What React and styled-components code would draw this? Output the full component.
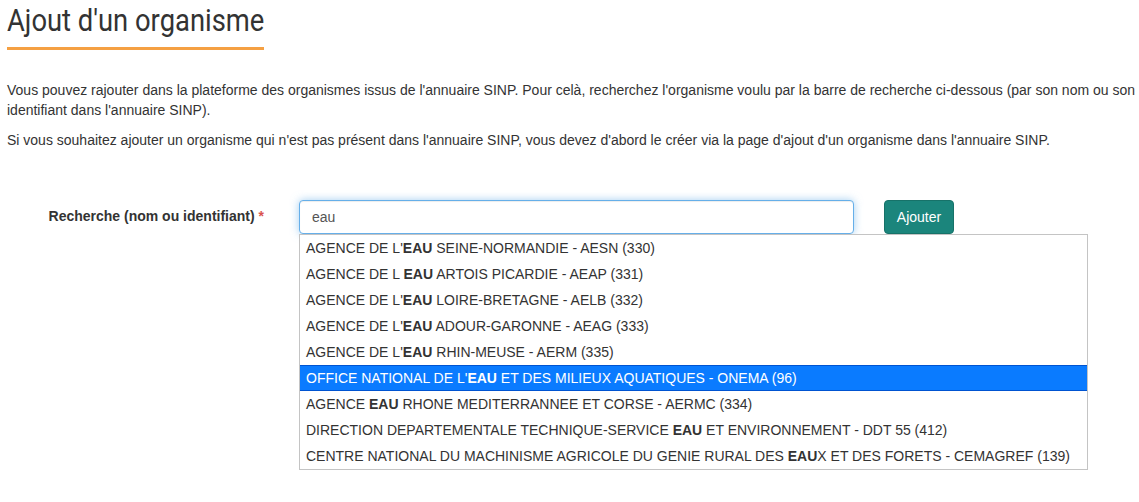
import React from "react";
import styled, { createGlobalStyle } from "styled-components";

const Global = createGlobalStyle`
  html, body { margin: 0; padding: 0; background: #fff; }
  body { font-family: "Liberation Sans", Arial, sans-serif; font-size: 14px; line-height: 20px; color: #333; }
  * { box-sizing: border-box; }
`;

const Page = styled.div`
  padding: 0 0 20px 7px;
  width: 1139px;
`;

const Title = styled.h1`
  width: 257px;
  margin: 0;
  padding-top: 1px;
  padding-bottom: 8px;
  font-family: Roboto, "Liberation Sans", sans-serif;
  font-weight: 400;
  font-size: 32px;
  line-height: 38px;
  color: #333;
  white-space: nowrap;
  border-bottom: 3px solid #f5a042;
`;

const TitleText = styled.span`
  display: inline-block;
  transform: scaleX(0.855);
  transform-origin: left center;
`;

const Intro = styled.div`
  margin-top: 30px;
`;

const P = styled.p`
  margin: 0 0 10px;
`;

const FormRow = styled.div`
  margin-top: 50px;
  display: grid;
  grid-template-columns: 257px 555px 70px;
  column-gap: 35px;
  align-items: start;
`;

const Label = styled.label`
  text-align: right;
  font-weight: 700;
  padding-top: 6px;
  line-height: 20px;
`;

const Req = styled.span`
  color: #d9534f;
`;

const Field = styled.div`
  display: flex;
  flex-direction: column;
  align-items: flex-start;
`;

const Input = styled.input`
  display: block;
  width: 555px;
  height: 34px;
  padding: 6px 12px;
  font-family: "Liberation Sans", Arial, sans-serif;
  font-size: 14px;
  color: #555;
  border: 1px solid #66afe9;
  border-radius: 4px;
  outline: none;
  box-shadow: inset 0 1px 1px rgba(0, 0, 0, 0.075), 0 0 8px rgba(102, 175, 233, 0.6);
`;

const Menu = styled.ul`
  width: 789px;
  margin: 0;
  padding: 0;
  list-style: none;
  background: #fff;
  border: 1px solid #c4c4c4;
`;

const Item = styled.li`
  height: 26px;
  line-height: 24px;
  padding: 0 0 0 6px;
  white-space: nowrap;
  color: ${(p) => (p.$active ? "#fff" : "#333")};
  background: ${(p) => (p.$active ? "#0a7bff" : "transparent")};
  border-top: 1px solid ${(p) => (p.$active ? "#0054d1" : "transparent")};
  border-bottom: 1px solid ${(p) => (p.$active ? "#0054d1" : "transparent")};
  b { font-weight: 700; }
`;

const Button = styled.button`
  margin-left: -5px;
  height: 34px;
  width: 70px;
  padding: 6px 0;
  font-family: "Liberation Sans", Arial, sans-serif;
  font-size: 14px;
  line-height: 20px;
  color: #fff;
  background: #1b857c;
  border: 1px solid #177269;
  border-radius: 4px;
  cursor: pointer;
`;

const items = [
  ["AGENCE DE L'", "EAU", " SEINE-NORMANDIE - AESN (330)"],
  ["AGENCE DE L ", "EAU", " ARTOIS PICARDIE - AEAP (331)"],
  ["AGENCE DE L'", "EAU", " LOIRE-BRETAGNE - AELB (332)"],
  ["AGENCE DE L'", "EAU", " ADOUR-GARONNE - AEAG (333)"],
  ["AGENCE DE L'", "EAU", " RHIN-MEUSE - AERM (335)"],
  ["OFFICE NATIONAL DE L'", "EAU", " ET DES MILIEUX AQUATIQUES - ONEMA (96)"],
  ["AGENCE ", "EAU", " RHONE MEDITERRANNEE ET CORSE - AERMC (334)"],
  ["DIRECTION DEPARTEMENTALE TECHNIQUE-SERVICE ", "EAU", " ET ENVIRONNEMENT - DDT 55 (412)"],
  ["CENTRE NATIONAL DU MACHINISME AGRICOLE DU GENIE RURAL DES ", "EAU", "X ET DES FORETS - CEMAGREF (139)"],
];

export default function App() {
  return (
    <Page>
      <Global />
      <Title>
        <TitleText>Ajout d'un organisme</TitleText>
      </Title>
      <Intro>
        <P>
          Vous pouvez rajouter dans la plateforme des organismes issus de l'annuaire SINP. Pour celà, recherchez
          l'organisme voulu par la barre de recherche ci-dessous (par son nom ou son identifiant dans l'annuaire SINP).
        </P>
        <P>
          Si vous souhaitez ajouter un organisme qui n'est pas présent dans l'annuaire SINP, vous devez d'abord le créer
          via la page d'ajout d'un organisme dans l'annuaire SINP.
        </P>
      </Intro>
      <FormRow>
        <Label>
          Recherche (nom ou identifiant) <Req>*</Req>
        </Label>
        <Field>
          <Input defaultValue="eau" />
          <Menu>
            {items.map((it, i) => (
              <Item key={i} $active={i === 5}>
                {it[0]}
                <b>{it[1]}</b>
                {it[2]}
              </Item>
            ))}
          </Menu>
        </Field>
        <Button>Ajouter</Button>
      </FormRow>
    </Page>
  );
}
